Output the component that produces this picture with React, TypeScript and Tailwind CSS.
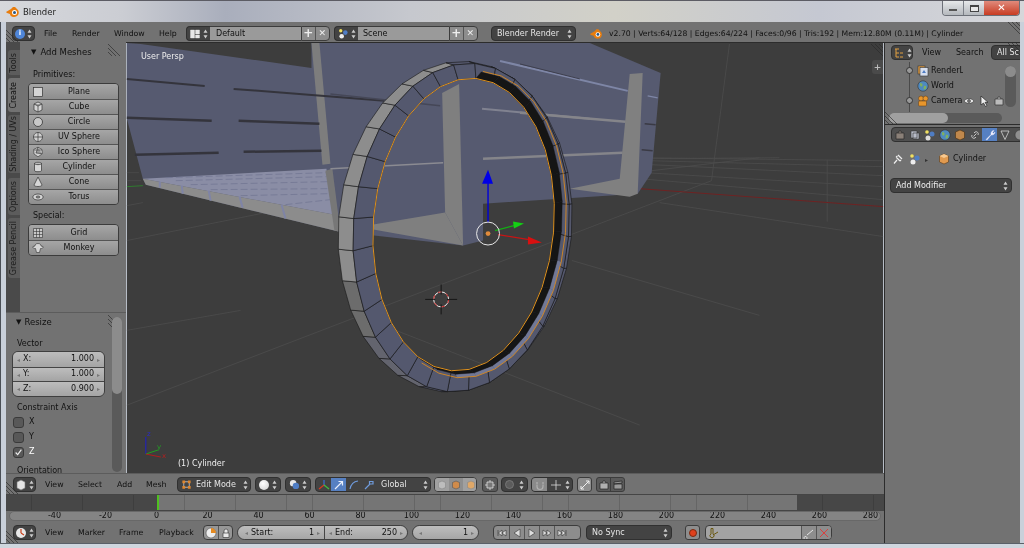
import type { ReactNode } from "react";

const N = 32;
const TILT = (4.8 * Math.PI) / 180;
type Ell = { cx: number; cy: number; rx: number; ry: number };

// ring outlines, measured off the reference
const E1: Ell = { cx: 455, cy: 226, rx: 117, ry: 166 };
const E2: Ell = { cx: 461, cy: 227, rx: 108, ry: 165 };
const E3: Ell = { cx: 463.5, cy: 224, rx: 90.5, ry: 147 };
const E4: Ell = { cx: 470, cy: 224, rx: 96, ry: 154 };
const E5: Ell = { cx: 468.5, cy: 222.5, rx: 93.5, ry: 152 };

function pt(e: Ell, a: number): [number, number] {
  const x = e.rx * Math.cos(a);
  const y = e.ry * Math.sin(a);
  return [e.cx + x * Math.cos(TILT) - y * Math.sin(TILT), e.cy + x * Math.sin(TILT) + y * Math.cos(TILT)];
}
const ang = (i: number) => (i / N) * Math.PI * 2;

function quad(a: Ell, b: Ell, i: number) {
  const p = [pt(a, ang(i)), pt(a, ang(i + 1)), pt(b, ang(i + 1)), pt(b, ang(i))];
  return p.map((q) => q.join(",")).join(" ");
}
function arc(e: Ell, from: number, to: number) {
  const out: string[] = [];
  for (let i = from; i <= to; i++) out.push(pt(e, ang(i)).join(","));
  return out.join(" ");
}

function rimColor(i: number) {
  const a = ang(i + 0.5);
  const c = Math.cos(a);
  const s = Math.sin(a);
  if (c > -0.25) return "#55586d";
  if (s > 0.75) return "#63646e";
  if (s > 0.35) return "#6c6c6c";
  return "#8d8d8d";
}

function Ring() {
  const idx = Array.from({ length: N }, (_, i) => i);
  return (
    <g>
      {idx.map((i) => (
        <polygon key={`r${i}`} points={quad(E1, E2, i)} fill={rimColor(i)} stroke="#161616" strokeWidth="0.6" />
      ))}
      {idx.map((i) => (
        <polygon key={`f${i}`} points={quad(E2, E3, i)} fill="#54586e" stroke="#161616" strokeWidth="0.6" />
      ))}
      {idx.filter((i) => i >= 1 && i <= 7).map((i) => (
        <polygon key={`l${i}`} points={quad(E5, E4, i)} fill="#717896" />
      ))}
      {idx.filter((i) => i >= 24 || i <= 9).map((i) => (
        <polygon key={`b${i}`} points={quad(E3, E5, i)} fill="#151515" stroke="#151515" strokeWidth="0.4" />
      ))}
      <polyline points={arc(E4, -8, 10)} fill="none" stroke="#d98a1e" strokeWidth="0.9" />
      <polygon points={arc(E3, 0, N)} fill="none" stroke="#e0931f" strokeWidth="1" />
    </g>
  );
}

function Scene() {
  const gridLines = [
    [640, 157, 884, 160], [650, 160, 884, 166], [652, 164, 884, 175], [645, 172, 884, 186], [640, 178, 884, 199],
    [640, 158, 780, 157], [652, 170, 760, 157], [712, 180, 730, 43], [712, 180, 126, 405], [828, 159, 828, 221],
    [660, 202, 884, 236], [572, 260, 760, 315], [380, 324, 640, 425], [126, 330, 240, 310], [126, 240, 300, 205],
    [126, 205, 142, 202], [126, 172, 138, 172], [126, 180, 140, 180],
  ];
  return (
    <svg viewBox="126 42 758 431" className="absolute inset-0 h-full w-full">
      <rect x="126" y="42" width="758" height="431" fill="#3d3d3d" />
      {gridLines.map((l, i) => (
        <line key={i} x1={l[0]} y1={l[1]} x2={l[2]} y2={l[3]} stroke="#4c4c4c" strokeWidth="0.8" />
      ))}
      <line x1="640" y1="188" x2="884" y2="206" stroke="#6e2222" strokeWidth="1" />
      <line x1="126" y1="186" x2="142" y2="185" stroke="#2f7a2f" strokeWidth="1" />

      {/* crate */}
      <polygon
        points="126,42 140,43 311,67 311,42 590,42 661,72 652,172 638,193 483,203 483,240 463,245 338,231 145,184 142,178 126,118"
        fill="#565a70"
      />
      <polygon points="142,178 326,168 333,214" fill="#8a8da5" />
      <polygon points="142,178 333,214 338,231 145,184" fill="#8c8c8c" />
      {[[159, 181, 159, 187], [181, 185, 182, 193], [208, 190, 210, 200], [239, 196, 242, 207], [281, 204, 285, 218]].map((l, i) => (
        <line key={i} x1={l[0]} y1={l[1]} x2={l[2]} y2={l[3]} stroke="#7f84a6" strokeWidth="2" />
      ))}
      {[[165, 177, 326, 172], [175, 180, 326, 176], [190, 184, 328, 181], [210, 189, 329, 188], [240, 195, 330, 193], [285, 204, 330, 199]].map((l, i) => (
        <line key={i} x1={l[0]} y1={l[1]} x2={l[2]} y2={l[3]} stroke="#6f7390" strokeWidth="0.7" strokeDasharray="7 3" />
      ))}
      <polygon points="311,42 319,42 330,163 322,164" fill="#7d7d7d" />
      <polygon points="325,170 332,168 340,231 334,230" fill="#777" />
      <line x1="126" y1="78" x2="204" y2="85" stroke="#34343c" strokeWidth="2" />
      <line x1="233" y1="88" x2="384" y2="100" stroke="#34343c" strokeWidth="2" />
      <line x1="126" y1="117" x2="211" y2="120" stroke="#34343c" strokeWidth="2.5" />
      <line x1="238" y1="120" x2="319" y2="123" stroke="#34343c" strokeWidth="2.5" />
      <line x1="134" y1="154" x2="218" y2="152" stroke="#34343c" strokeWidth="2.5" />
      <line x1="243" y1="151" x2="321" y2="150" stroke="#34343c" strokeWidth="2.5" />
      <line x1="330" y1="93" x2="440" y2="105" stroke="#454757" strokeWidth="1.5" />
      <line x1="330" y1="168" x2="443" y2="162" stroke="#8b8b92" strokeWidth="1.5" />
      <polygon points="442,92 459,83 463,245 445,212" fill="#7f7f7f" />
      <polygon points="373,224 445,212 463,245 373,229" fill="#7f7f7f" />
      <line x1="482" y1="108" x2="590" y2="118" stroke="#808290" strokeWidth="2" />
      <line x1="483" y1="158" x2="623" y2="152" stroke="#85858a" strokeWidth="2.5" />
      <line x1="520" y1="112" x2="626" y2="121" stroke="#85858a" strokeWidth="2.5" />
      <line x1="500" y1="60" x2="628" y2="90" stroke="#7e86a6" strokeWidth="2" />
      <line x1="520" y1="63" x2="580" y2="78" stroke="#3d3e4c" strokeWidth="1" />
      <polygon points="630,73 643,72 638,193 630,196 570,188 620,178" fill="#808080" />
      <line x1="648" y1="95" x2="658" y2="97" stroke="#7e86a6" strokeWidth="1.5" />
      <line x1="645" y1="123" x2="656" y2="124" stroke="#3a3a44" strokeWidth="1.5" />
      <line x1="642" y1="149" x2="653" y2="150" stroke="#3a3a44" strokeWidth="1.5" />

      <Ring />

      {/* transform gizmo */}
      <line x1="488" y1="222" x2="488" y2="182" stroke="#0000d8" strokeWidth="1.4" />
      <polygon points="488,169 482,183 493,183" fill="#0000e6" />
      <line x1="495" y1="230" x2="514" y2="225" stroke="#12b012" strokeWidth="1.2" />
      <polygon points="524,223 513,221 514,228" fill="#14d014" />
      <line x1="498" y1="234" x2="529" y2="239" stroke="#c81414" strokeWidth="1.2" />
      <polygon points="542,242 528,236 528,244" fill="#d81010" />
      <circle cx="488" cy="233" r="11.5" fill="none" stroke="#e8e8e8" strokeWidth="1" />
      <circle cx="488" cy="233" r="2.4" fill="#e08a3c" />

      {/* 3d cursor */}
      <circle cx="441" cy="299" r="7.5" fill="none" stroke="#f0f0f0" strokeWidth="1" />
      <circle cx="441" cy="299" r="7.5" fill="none" stroke="#c81e1e" strokeWidth="1" strokeDasharray="4 4" />
      <path d="M425 299h10M447 299h10M441 284v10M441 304v10" stroke="#111" strokeWidth="0.9" />

      {/* axis widget */}
      <line x1="145" y1="454" x2="145" y2="437" stroke="#1e1ec8" strokeWidth="1" />
      <line x1="145" y1="454" x2="157" y2="450" stroke="#1fa01f" strokeWidth="1" />
      <line x1="145" y1="454" x2="160" y2="457" stroke="#b01c1c" strokeWidth="1" />
    </svg>
  );
}

function Hatch({ className, flip }: { className: string; flip?: boolean }) {
  return (
    <svg viewBox="0 0 12 12" className={`absolute h-[12px] w-[12px] ${className}`}>
      <path
        d={flip ? "M0 0l12 12M4 0l8 8M8 0l4 4" : "M0 0l12 12M0 4l8 8M0 8l4 4"}
        stroke="#2a2a2a"
        strokeWidth="0.8"
        opacity="0.8"
      />
    </svg>
  );
}

function Updown({ light }: { light?: boolean }) {
  return (
    <svg viewBox="0 0 5 10" className="h-[10px] w-[5px] shrink-0">
      <path d="M2.5 0.5L4.5 3.8H0.5ZM2.5 9.5L4.5 6.2H0.5Z" fill={light ? "#dddddd" : "#cccccc"} />
    </svg>
  );
}

function DarkBtn({ className, children }: { className: string; children: ReactNode }) {
  return (
    <div className={`flex h-[15px] shrink-0 items-center rounded-[4px] border border-[#303030] bg-[#434343] text-[#e6e6e6] ${className}`}>
      {children}
    </div>
  );
}

function Menu({ items }: { items: [string, number][] }) {
  return (
    <>
      {items.map(([t, w]) => (
        <span key={t} className="shrink-0 text-[7.8px] text-[#101010]" style={{ width: w }}>
          {t}
        </span>
      ))}
    </>
  );
}

function MeshIcon({ name }: { name: string }) {
  const s = "#333";
  return (
    <svg viewBox="0 0 12 12" className="h-[12px] w-[12px] shrink-0">
      {name === "Plane" && <rect x="1.5" y="1.5" width="9" height="9" fill="#d4d4d4" stroke={s} strokeWidth="0.7" />}
      {name === "Cube" && <path d="M6 1l4 2v6l-4 2-4-2V3zM2 3l4 2 4-2M6 5v6" fill="#d4d4d4" stroke={s} strokeWidth="0.7" />}
      {name === "Circle" && <circle cx="6" cy="6" r="4.5" fill="#c8c8c8" stroke={s} strokeWidth="0.8" />}
      {name === "UV Sphere" && <path d="M6 1.5a4.5 4.5 0 1 0 .01 0zM1.5 6h9M6 1.5v9" fill="#d0d0d0" stroke={s} strokeWidth="0.7" />}
      {name === "Ico Sphere" && <path d="M6 1.2l4 2.3.4 4.2L6 10.8 2 8 1.6 3.5zM2 4l8 0M6 1.2L4 7l6 .7" fill="#d0d0d0" stroke={s} strokeWidth="0.6" />}
      {name === "Cylinder" && <path d="M2.5 2.5C2.5 .9 9.5 .9 9.5 2.5V9.5C9.5 11.1 2.5 11.1 2.5 9.5ZM2.5 2.5C2.5 4 9.5 4 9.5 2.5" fill="#d6d6d6" stroke={s} strokeWidth="0.7" />}
      {name === "Cone" && <path d="M6 1L10 9C10 11 2 11 2 9Z" fill="#d6d6d6" stroke={s} strokeWidth="0.7" />}
      {name === "Torus" && <path d="M6 3C9 3 11.2 4.4 11.2 6S9 9 6 9 .8 7.6.8 6 3 3 6 3ZM6 5C4.8 5 4 5.5 4 6S4.8 7 6 7 8 6.500 8 6 7.200 5 6 5Z" fill="#d6d6d6" stroke={s} strokeWidth="0.7" fillRule="evenodd" />}
      {name === "Grid" && <path d="M1.500 1.500h9v9h-9zM4.500 1.500v9M7.500 1.500v9M1.500 4.500h9M1.500 7.500h9" fill="#c8c8c8" stroke={s} strokeWidth="0.6" />}
      {name === "Monkey" && <path d="M6 1.500C8.500 1.500 9 3 9 4L11 4.500C11.500 6 10 6.800 8.500 6.500L7.500 10.500H4.500L3.500 6.500C2 6.800.500 6 1 4.500L3 4C3 3 3.500 1.500 6 1.500Z" fill="#d4d4d4" stroke={s} strokeWidth="0.6" />}
    </svg>
  );
}

function MeshGroup({ names }: { names: string[] }) {
  return (
    <div className="ml-[8px] mr-[7px] flex flex-col overflow-hidden rounded-[4px] border border-[#3c3c3c]">
      {names.map((n, i) => (
        <div
          key={n}
          className={`flex h-[15px] items-center bg-[linear-gradient(#a6a6a6,#8d8d8d)] pl-[3px] text-[8px] text-[#111] ${i > 0 ? "border-t border-[#555]" : ""}`}
        >
          <MeshIcon name={n} />
          <span className="flex-1 pr-[4px] text-center">{n}</span>
        </div>
      ))}
    </div>
  );
}

function VTab({ label, h, active, mt }: { label: string; h: number; active?: boolean; mt: number }) {
  return (
    <div
      className={`flex w-[12px] items-center justify-center overflow-hidden rounded-l-[3px] text-[8px] ${active ? "ml-[2px] bg-[#727272] text-[#111]" : "ml-[2px] bg-[#5c5c5c] text-[#1c1c1c]"}`}
      style={{ height: h, marginTop: mt }}
    >
      <span className="rotate-180 whitespace-nowrap [writing-mode:vertical-rl]">{label}</span>
    </div>
  );
}

function NumRow({ label, value }: { label: string; value: string }) {
  return (
    <div className="flex h-[14.5px] items-center border-t border-[#454545] bg-[linear-gradient(#bdbdbd,#a4a4a4)] px-[4px] text-[8px] text-[#111] first:border-t-0">
      <span className="mr-[3px] text-[6px] text-[#777]">◂</span>
      <span>{label}</span>
      <span className="flex-1 pr-[3px] text-right">{value}</span>
      <span className="text-[6px] text-[#777]">▸</span>
    </div>
  );
}

function Check({ label, on }: { label: string; on?: boolean }) {
  return (
    <div className="flex h-[15px] items-center">
      <div className="relative h-[11px] w-[11px] rounded-[3px] border border-[#3a3a3a] bg-[#585858]">
        {on && (
          <svg viewBox="0 0 11 11" className="absolute inset-0">
            <path d="M2 5.500L4.500 8L9 2" fill="none" stroke="#eee" strokeWidth="1.4" />
          </svg>
        )}
      </div>
      <span className={`ml-[5px] text-[8px] ${on ? "text-white" : "text-[#111]"}`}>{label}</span>
    </div>
  );
}

function ToolsPanel() {
  return (
    <div className="relative flex w-[120px] shrink-0 flex-col bg-[#727272]">
      <div className="relative flex h-[270px] shrink-0">
        <div className="flex w-[14px] shrink-0 flex-col bg-[#4a4a4a]">
          <VTab label="Tools" h={25} mt={8} />
          <VTab label="Create" h={34} active mt={3} />
          <VTab label="Shading / UVs" h={58} mt={3} />
          <VTab label="Options" h={37} mt={5} />
          <VTab label="Grease Pencil" h={60} mt={3} />
        </div>
        <div className="relative flex-1">
          <Hatch className="right-[6px] top-[2px]" />
          <div className="flex h-[20px] items-center pl-[11px] pt-[1px] text-[8.500px] text-[#111]">
            <span className="mr-[4px] text-[7px]">▼</span>Add Meshes
          </div>
          <div className="pl-[13px] pt-[6px] text-[8px] leading-[14px] text-[#111]">Primitives:</div>
          <div className="mt-[1px]">
            <MeshGroup names={["Plane", "Cube", "Circle", "UV Sphere", "Ico Sphere", "Cylinder", "Cone", "Torus"]} />
          </div>
          <div className="pl-[13px] pt-[4px] text-[8px] leading-[14px] text-[#111]">Special:</div>
          <div className="mt-[1px]">
            <MeshGroup names={["Grid", "Monkey"]} />
          </div>
        </div>
      </div>
      <div className="relative flex-1 overflow-hidden border-t border-[#5c5c5c] pl-[6px]">
        <Hatch className="right-[6px] top-[2px]" />
        <div className="absolute bottom-[1px] right-[4px] top-[4px] w-[10px] rounded-full bg-[#5a5a5a]">
          <div className="h-[77px] rounded-full bg-[#8c8c8c]" />
        </div>
        <div className="flex h-[19px] items-center pl-[4px] text-[8.500px] text-[#111]">
          <span className="mr-[3px] text-[7px]">▼</span>Resize
        </div>
        <div className="pl-[5px] pt-[5px] text-[8px] leading-[14px] text-[#111]">Vector</div>
        <div className="w-[93px] overflow-hidden rounded-[6px] border border-[#3f3f3f]">
          <NumRow label="X:" value="1.000" />
          <NumRow label="Y:" value="1.000" />
          <NumRow label="Z:" value="0.900" />
        </div>
        <div className="pl-[5px] pt-[4px] text-[8px] leading-[14px] text-[#111]">Constraint Axis</div>
        <div className="pl-[1px]">
          <Check label="X" />
          <Check label="Y" />
          <Check label="Z" on />
        </div>
        <div className="pl-[5px] pt-[4px] text-[8px] leading-[14px] text-[#111]">Orientation</div>
      </div>
    </div>
  );
}

function Viewport() {
  return (
    <div className="relative flex-1 overflow-hidden border-t border-[#2c2c2c]">
      <Scene />
      <span className="absolute left-[15px] top-[8px] text-[8px] text-[#eeeeee]">User Persp</span>
      <span className="absolute bottom-[3px] left-[52px] text-[8px] text-[#eeeeee]">(1) Cylinder</span>
      <span className="absolute left-[21px] top-[386px] text-[7px] text-[#2a2ac8]">z</span>
      <span className="absolute left-[31px] top-[399px] text-[7px] text-[#22a022]">y</span>
      <span className="absolute left-[36px] top-[408px] text-[7px] text-[#b02020]">x</span>
      <Hatch className="right-[1px] top-[1px]" flip />
      <div className="absolute right-[1px] top-[17px] flex h-[14px] w-[11px] items-center justify-center rounded-l-[3px] bg-[#4a4a4a] text-[9px] font-bold leading-none text-[#bbb]">
        +
      </div>
    </div>
  );
}

function Tool({ children, className = "" }: { children: ReactNode; className?: string }) {
  return <div className={`flex h-[15px] shrink-0 items-center justify-center ${className}`}>{children}</div>;
}

function Small({ d, fill = "none", stroke = "#ddd", sw = 1 }: { d: string; fill?: string; stroke?: string; sw?: number }) {
  return (
    <svg viewBox="0 0 12 12" className="h-[12px] w-[12px]">
      <path d={d} fill={fill} stroke={stroke} strokeWidth={sw} />
    </svg>
  );
}

function CubeEditorIcon() {
  return <Small d="M6 1l4 2v6l-4 2-4-2V3z" fill="#e4e4e4" stroke="#777" sw={0.6} />;
}

function ClockIcon() {
  return (
    <svg viewBox="0 0 12 12" className="h-[12px] w-[12px]">
      <circle cx="6" cy="6" r="5" fill="#e8e8e8" />
      <path d="M6 6V2M6 6l3 2" stroke="#c8401c" strokeWidth="1.2" />
    </svg>
  );
}

function ViewHeader() {
  return (
    <div className="relative flex h-[21px] shrink-0 items-center border-t border-[#5c5c5c] bg-[#727272] pl-[7px] pt-[1px]">
      <Hatch className="bottom-0 left-0" />
      <DarkBtn className="w-[23px] justify-center gap-[2px]"><CubeEditorIcon /><Updown /></DarkBtn>
      <div className="ml-[9px] flex items-center"><Menu items={[["View", 33], ["Select", 39], ["Add", 29], ["Mesh", 31]]} /></div>
      <DarkBtn className="w-[74px] pl-[3px] pr-[2px] text-[8px]">
        <svg viewBox="0 0 12 12" className="h-[11px] w-[11px]">
          <path d="M3 3h6v6H3z" fill="none" stroke="#d8d8d8" strokeWidth="0.8" />
          <path d="M1.500 1.500h3v3h-3zM7.500 1.500h3v3h-3zM1.500 7.500h3v3h-3zM7.500 7.500h3v3h-3z" fill="#e0862e" />
        </svg>
        <span className="ml-[4px] flex-1">Edit Mode</span><Updown />
      </DarkBtn>
      <DarkBtn className="ml-[4px] w-[26px] justify-between px-[3px]">
        <span className="h-[10px] w-[10px] rounded-full bg-[radial-gradient(circle_at_40%_35%,#fff,#cfcfcf)]" /><Updown />
      </DarkBtn>
      <DarkBtn className="ml-[4px] w-[26px] justify-between px-[3px]">
        <svg viewBox="0 0 12 12" className="h-[11px] w-[11px]"><circle cx="4.500" cy="4.500" r="3.500" fill="#e8e8e8" /><circle cx="7.500" cy="7.500" r="3.500" fill="#4f7dc4" /></svg>
        <Updown />
      </DarkBtn>
      <div className="ml-[4px] flex h-[15px] w-[116px] shrink-0 items-center overflow-hidden rounded-[4px] border border-[#303030] bg-[#434343]">
        <Tool className="w-[15px]">
          <svg viewBox="0 0 12 12" className="h-[12px] w-[12px]"><path d="M6 6V1" stroke="#3a6fd8" strokeWidth="1.200" /><path d="M6 6L1 10" stroke="#d83a20" strokeWidth="1.200" /><path d="M6 6l5 4" stroke="#3fc03f" strokeWidth="1.200" /></svg>
        </Tool>
        <Tool className="w-[15px] bg-[#5680c2]"><Small d="M2 10L9 3M5.500 2.500H9.500V6.500" stroke="#e8eefc" sw={1.200} /></Tool>
        <Tool className="w-[15px]"><Small d="M2 10C3 5 6 2.500 10 2" stroke="#6f9bdc" sw={1.200} /></Tool>
        <Tool className="w-[15px]"><Small d="M2 10L7 5M6.500 2.500H10V5H6.500Z" stroke="#6f9bdc" sw={1.200} /></Tool>
        <span className="ml-[5px] flex-1 text-[8px] text-[#e6e6e6]">Global</span>
        <span className="pr-[2px]"><Updown /></span>
      </div>
      <div className="ml-[3px] flex h-[15px] w-[43px] shrink-0 items-center overflow-hidden rounded-[4px] border border-[#3c3c3c] bg-[#8e8e8e]">
        <Tool className="w-[14px] bg-[#a0a0a0]"><Small d="M6 2l3.500 1.500v5L6 10 2.500 8.500v-5z" fill="#bdbdbd" stroke="#888" sw={0.6} /></Tool>
        <Tool className="w-[14px]"><Small d="M6 2l3.500 1.500v5L6 10 2.500 8.500v-5z" fill="#d08b4a" stroke="#555" sw={0.6} /></Tool>
        <Tool className="w-[15px] bg-[#a0a0a0]"><Small d="M6 2l3.500 1.500v5L6 10 2.500 8.500v-5z" fill="#e0a868" stroke="#888" sw={0.6} /></Tool>
      </div>
      <div className="ml-[5px] flex h-[15px] w-[16px] shrink-0 items-center justify-center rounded-[3px] border border-[#3c3c3c] bg-[#5a5a5a]">
        <Small d="M3 3h6v6H3zM1 6h2M9 6h2M6 1v2M6 9v2" fill="#777" stroke="#e0e0e0" sw={0.8} />
      </div>
      <DarkBtn className="ml-[3px] w-[27px] justify-between px-[3px]">
        <span className="h-[9px] w-[9px] rounded-full border border-[#777] bg-[#5c5c5c]" /><Updown />
      </DarkBtn>
      <div className="ml-[3px] flex h-[15px] w-[42px] shrink-0 items-center overflow-hidden rounded-[4px] border border-[#303030] bg-[#434343]">
        <Tool className="w-[15px] bg-[#8a8a8a]"><Small d="M3 5.500v2a3 3 0 0 0 6 0v-2M3 3v2M9 3v2" stroke="#b0b0b0" sw={1.200} /></Tool>
        <Tool className="w-[18px]"><Small d="M6 1v10M1 6h10" stroke="#dcdcdc" sw={0.8} /></Tool>
        <Updown />
      </div>
      <div className="ml-[4px] flex h-[15px] w-[15px] shrink-0 items-center justify-center rounded-[3px] border border-[#3c3c3c] bg-[#8e8e8e]">
        <Small d="M2 10L10 2M2 7v3h3M7 2h3v3" stroke="#f0f0f0" sw={1} />
      </div>
      <div className="ml-[4px] flex h-[15px] w-[29px] shrink-0 items-center overflow-hidden rounded-[3px] border border-[#3c3c3c] bg-[#5a5a5a]">
        <Tool className="w-[14px] border-r border-[#3c3c3c]"><Small d="M2 4h8v6H2zM4 4l1-2h2l1 2" fill="#b0b0b0" stroke="#222" sw={0.7} /></Tool>
        <Tool className="w-[14px]"><Small d="M2 5h8v5H2zM2 3l8-1v2l-8 1z" fill="#999" stroke="#222" sw={0.7} /></Tool>
      </div>
    </div>
  );
}

const TICKS = [-40, -20, 0, 20, 40, 60, 80, 100, 120, 140, 160, 180, 200, 220, 240, 260, 280];

function Timeline() {
  return (
    <div className="relative h-[28px] shrink-0 bg-[#727272]">
      <div className="flex h-[17px] border-y border-[#454545] bg-[#757575]">
        <div className="w-[151px] shrink-0 bg-[#474747] bg-[repeating-linear-gradient(90deg,transparent_0,transparent_25px,#3e3e3e_25px,#3e3e3e_25.600px)]" />
        <div className="w-[2px] shrink-0 bg-[#4fc020]" />
        <div className="w-[638px] shrink-0 bg-[repeating-linear-gradient(90deg,transparent_0,transparent_25px,#656565_25px,#656565_25.600px)]" />
        <div className="flex-1 bg-[#474747] bg-[repeating-linear-gradient(90deg,transparent_0,transparent_25px,#3e3e3e_25px,#3e3e3e_25.600px)]" />
      </div>
      <div className="mx-[3px] flex h-[10px] items-center overflow-hidden rounded-full border border-[#686868] bg-[#848484] pl-[19px] text-[8px] leading-none text-[#111]">
        {TICKS.map((t) => (
          <span key={t} className="w-[51px] shrink-0 text-center">{t}</span>
        ))}
      </div>
    </div>
  );
}

function TimeField({ label, value, className }: { label: string; value: string; className: string }) {
  return (
    <div className={`flex h-full items-center bg-[linear-gradient(#bdbdbd,#a6a6a6)] px-[4px] text-[8px] text-[#111] ${className}`}>
      <span className="mr-[3px] text-[6px] text-[#777]">◂</span>
      <span>{label}</span>
      <span className="flex-1 pr-[3px] text-right">{value}</span>
      <span className="text-[6px] text-[#777]">▸</span>
    </div>
  );
}

function Transport({ d }: { d: string }) {
  return (
    <Tool className="w-[15px] border-l border-[#555] first:border-l-0">
      <Small d={d} fill="#ddd" stroke="#333" sw={0.6} />
    </Tool>
  );
}

function TimeHeader() {
  return (
    <div className="relative flex h-[21px] shrink-0 items-center bg-[#727272] pl-[7px]">
      <Hatch className="bottom-0 left-0" />
      <DarkBtn className="w-[23px] justify-center gap-[2px]"><ClockIcon /><Updown /></DarkBtn>
      <div className="ml-[9px] flex items-center"><Menu items={[["View", 33], ["Marker", 41], ["Frame", 40], ["Playback", 44]]} /></div>
      <div className="flex h-[15px] w-[30px] shrink-0 items-center overflow-hidden rounded-[4px] border border-[#3c3c3c] bg-[#969696]">
        <Tool className="w-[15px] border-r border-[#555]">
          <svg viewBox="0 0 12 12" className="h-[12px] w-[12px]"><circle cx="6" cy="6" r="5" fill="#eee" stroke="#555" strokeWidth="0.6" /><path d="M6 6V1a5 5 0 0 1 5 5z" fill="#e58a20" /></svg>
        </Tool>
        <Tool className="w-[14px]"><Small d="M3 6h6v4.500H3zM4 6V4a2 2 0 0 1 4 0v2" fill="#e8e8e8" stroke="#444" sw={0.7} /></Tool>
      </div>
      <div className="ml-[4px] flex h-[15px] w-[171px] shrink-0 overflow-hidden rounded-full border border-[#3f3f3f]">
        <TimeField label="Start:" value="1" className="w-[87px] pl-[7px] border-r border-[#454545]" />
        <TimeField label="End:" value="250" className="flex-1" />
      </div>
      <div className="ml-[4px] h-[15px] w-[67px] shrink-0 overflow-hidden rounded-full border border-[#3f3f3f]">
        <TimeField label="" value="1" className="pl-[6px]" />
      </div>
      <div className="ml-[14px] flex h-[15px] w-[88px] shrink-0 items-center overflow-hidden rounded-[4px] border border-[#3c3c3c] bg-[#8d8d8d]">
        <Transport d="M2 3v6M10 3L6 6l4 3zM6 3L2.500 6 6 9z" />
        <Transport d="M9 2v8L3 6z" />
        <Transport d="M3 2v8l6-4z" />
        <Transport d="M2 3l4 3-4 3zM6 3l4 3-4 3z" />
        <Transport d="M10 3v6M2 3l4 3-4 3zM6 3l3.500 3L6 9z" />
      </div>
      <DarkBtn className="ml-[5px] w-[86px] pl-[5px] pr-[3px] text-[8px]">
        <span className="flex-1">No Sync</span><Updown />
      </DarkBtn>
      <div className="ml-[13px] flex h-[15px] w-[15px] shrink-0 items-center justify-center rounded-[3px] border border-[#3c3c3c] bg-[#8d8d8d]">
        <span className="h-[8px] w-[8px] rounded-full border border-[#7a2a10] bg-[#e0401c]" />
      </div>
      <div className="ml-[5px] flex h-[15px] w-[127px] shrink-0 items-center overflow-hidden rounded-[4px] border border-[#3c3c3c] bg-[#a3a3a3]">
        <div className="flex h-full flex-1 items-center pl-[2px]">
          <Small d="M3 1.500h2V7a2 2 0 1 1-2 0zM5 8l5-3" stroke="#6a5810" sw={1} />
        </div>
        <Tool className="w-[15px] border-l border-[#555] bg-[#8d8d8d]"><Small d="M2.500 9.500a1.500 1.500 0 1 0 .01 0M4 8l6-5" stroke="#eee" sw={0.9} /></Tool>
        <Tool className="w-[15px] border-l border-[#555] bg-[#8d8d8d]"><Small d="M2 2l8 8M2 10l8-8" stroke="#d84040" sw={1} /></Tool>
      </div>
    </div>
  );
}

function RenderLayerIcon() {
  return (
    <svg viewBox="0 0 12 12" className="h-[12px] w-[12px]">
      <rect x="1" y="1" width="7" height="8" fill="#e8a040" stroke="#333" strokeWidth="0.6" />
      <rect x="3" y="2.500" width="8" height="8.500" fill="#d6deee" stroke="#333" strokeWidth="0.6" />
      <path d="M5 8l2-3 2 3z" fill="#4f7dc4" />
    </svg>
  );
}

function WorldIcon() {
  return (
    <svg viewBox="0 0 12 12" className="h-[12px] w-[12px]">
      <circle cx="6" cy="6" r="5.200" fill="#4f8ac0" stroke="#333" strokeWidth="0.6" />
      <path d="M3 3c2 0 3 1 2.500 2.500S3.500 7 3 5.500zM7 6c2-.5 3 .5 2 2.500S6.500 9.500 6.500 8z" fill="#7fb060" />
    </svg>
  );
}

function CameraIcon() {
  return (
    <svg viewBox="0 0 12 12" className="h-[12px] w-[12px]">
      <circle cx="4" cy="3.500" r="2.500" fill="#e8962c" stroke="#5a3a1a" strokeWidth="0.5" />
      <circle cx="8.500" cy="3.500" r="2.500" fill="#e8962c" stroke="#5a3a1a" strokeWidth="0.5" />
      <rect x="1.500" y="6" width="8" height="5" rx="1" fill="#e8962c" stroke="#5a3a1a" strokeWidth="0.5" />
    </svg>
  );
}

function OutlinerRow({ label, icon, extras, dot }: { label: string; icon: ReactNode; extras?: boolean; dot?: boolean }) {
  return (
    <div className="relative flex h-[15px] items-center pl-[32px] text-[8px] text-[#111]">
      {dot && <span className="absolute left-[21px] h-[7px] w-[7px] rounded-full border border-[#333] bg-[#999]" />}
      {icon}
      <span className="ml-[2px] w-[32px] shrink-0 overflow-hidden whitespace-nowrap">{label}</span>
      {extras && (
        <div className="flex items-center gap-[3px]">
          <Small d="M1 6C3 3 9 3 11 6 9 9 3 9 1 6ZM6 4.500a1.500 1.500 0 1 0 .01 0" fill="#eee" stroke="#333" sw={0.6} />
          <Small d="M3 1v9l2.500-2 2 3.500 1.500-1-2-3.200H10z" fill="#eee" stroke="#222" sw={0.7} />
          <Small d="M2 4h8v6H2zM4 4l1-2h2l1 2" fill="#bbb" stroke="#333" sw={0.7} />
        </div>
      )}
    </div>
  );
}

// property editor tabs: render, layers, scene, world, object, constraints, modifiers, data, material
const PROP_TABS: ReactNode[] = [
  <Small key="a" d="M2 4h8v6H2zM4 4l1-2h2l1 2" fill="#8a8078" stroke="#2a2a2a" sw={0.7} />,
  <Small key="b" d="M2 2h6v7H2zM4 4h6v6H4z" fill="#b8bcc8" stroke="#333" sw={0.6} />,
  <svg key="c" viewBox="0 0 12 12" className="h-[12px] w-[12px]"><circle cx="3" cy="3" r="1.800" fill="#f0e060" /><circle cx="8" cy="5" r="2.500" fill="#4f7dc4" /><circle cx="4" cy="9" r="2.500" fill="#ddd" /></svg>,
  <WorldIcon key="d" />,
  <Small key="e" d="M6 1l4.500 2v6L6 11 1.500 9V3z" fill="#c0884c" stroke="#4a3010" sw={0.6} />,
  <Small key="f" d="M4.500 7.500l3-3M3 6a2.200 2.200 0 0 0 3 3l1-1M5 4l1-1a2.200 2.200 0 0 1 3 3" stroke="#d0d0d0" sw={0.9} />,
  <Small key="g" d="M2 10.500L7 5.500C6.500 3.500 8 1.500 10 1.500L8.500 3.500 9.500 4.500 11 3C11 5 9 6.500 7 6L3 11z" fill="#eef" stroke="#eef" sw={0.4} />,
  <Small key="h" d="M2 2h8L6 10.500z" stroke="#d4d4d4" sw={0.8} />,
  <svg key="i" viewBox="0 0 12 12" className="h-[12px] w-[12px]"><circle cx="6" cy="6" r="5" fill="#8f8f8f" stroke="#333" strokeWidth="0.5" /></svg>,
];

function RightPanel() {
  return (
    <div className="flex w-[136px] shrink-0 flex-col overflow-hidden border-l border-[#2c2c2c] bg-[#727272]">
      <div className="relative flex h-[20px] shrink-0 items-center border-t border-[#2c2c2c] pl-[6px]">
        <DarkBtn className="w-[22px] justify-center gap-[2px]">
          <Small d="M2 2h4M3 2v8h3M3 6h3M7 6h3M7 10h3" stroke="#e2a040" sw={1} /><Updown />
        </DarkBtn>
        <span className="ml-[9px] w-[34px] shrink-0 text-[8px] text-[#111]">View</span>
        <span className="w-[35px] shrink-0 text-[8px] text-[#111]">Search</span>
        <div className="flex h-[15px] w-[40px] shrink-0 items-center overflow-hidden rounded-l-[4px] border border-[#303030] bg-[#434343] pl-[5px] text-[8px] text-[#e6e6e6]">
          <span className="whitespace-nowrap">All Sc</span>
        </div>
        <Hatch className="right-0 top-0" flip />
      </div>
      <div className="relative flex h-[50px] shrink-0 flex-col overflow-hidden bg-[#727272] pt-[1px]">
        <div className="absolute bottom-0 left-[24px] top-0 w-px bg-[#4a4a4a]" />
        <OutlinerRow label="RenderL" icon={<RenderLayerIcon />} dot />
        <OutlinerRow label="World" icon={<WorldIcon />} />
        <OutlinerRow label="Camera" icon={<CameraIcon />} extras dot />
        <div className="absolute bottom-[5px] right-[4px] top-[4px] w-[11px] rounded-full bg-[#5a5a5a]">
          <div className="h-[11px] rounded-full bg-[#8c8c8c]" />
        </div>
      </div>
      <div className="relative h-[12px] shrink-0 pl-[4px] pt-[1px]">
        <div className="h-[10px] w-[113px] rounded-full bg-[#5a5a5a]">
          <div className="h-[10px] w-[59px] rounded-full bg-[#a0a0a0]" />
        </div>
        <Hatch className="bottom-0 left-0" />
      </div>
      <div className="relative flex h-[20px] shrink-0 items-center border-t border-[#2c2c2c] pl-[6px]">
        <div className="flex h-[15px] shrink-0 overflow-hidden rounded-l-[4px] border border-[#303030] bg-[#4f4f4f]">
          {PROP_TABS.map((icon, i) => (
            <div key={i} className={`flex h-full w-[15px] items-center justify-center ${i === 6 ? "bg-[#5680c2]" : ""}`}>
              {icon}
            </div>
          ))}
        </div>
      </div>
      <div className="flex h-[30px] shrink-0 items-center pl-[7px] text-[8px] text-[#111]">
        <Small d="M2 10.500L5 7M4 4l4 4M6 2l4 4M5.500 3L4 4M9 7L8 8" stroke="#eee" sw={1.200} />
        <div className="ml-[5px] h-[12px] w-[12px]">
          <svg viewBox="0 0 12 12"><circle cx="3" cy="3" r="1.800" fill="#f0e060" /><circle cx="8" cy="5" r="2.500" fill="#4f7dc4" /><circle cx="4" cy="9" r="2.500" fill="#eee" /></svg>
        </div>
        <span className="ml-[4px] text-[6px] text-[#333]">▸</span>
        <div className="ml-[10px] h-[12px] w-[12px]">
          <svg viewBox="0 0 12 12"><path d="M6 1l4.500 2v6L6 11 1.500 9V3z" fill="#e09a50" stroke="#5a3a1a" strokeWidth="0.6" /><path d="M1.500 3L6 5l4.500-2L6 1z" fill="#f6c890" /></svg>
        </div>
        <span className="ml-[3px]">Cylinder</span>
      </div>
      <DarkBtn className="mx-[5px] mt-[4px] w-[122px] pl-[5px] pr-[3px] text-[8px] text-[#eee]">
        <span className="flex-1">Add Modifier</span><Updown />
      </DarkBtn>
    </div>
  );
}

export default function App() {
  return (
    <div className="flex h-[548px] w-[1024px] flex-col overflow-hidden bg-[#c9d0da] font-['DejaVu_Sans',sans-serif] blur-[0.4px]">
      {/* title bar */}
      <div className="relative flex h-[22px] shrink-0 items-center border-t border-[#5c5c64] bg-[linear-gradient(90deg,#d6d8dc_0%,#cbcdd3_12%,#a9aebc_22%,#c6c8ce_40%,#d2d1c8_60%,#c5c8d2_80%,#d6d7da_100%)] pl-[6px] pt-[1px]">
        <svg viewBox="0 0 14 12" className="h-[12px] w-[14px]">
          <path d="M0 6L5 3 7 1H9L12 4C14 7 12 11 8 11 5 11 4 9 4 8L1 7z" fill="#e87d0d" />
          <circle cx="8.500" cy="6.500" r="2.500" fill="#fff" />
          <circle cx="8.500" cy="6.500" r="1.500" fill="#265787" />
        </svg>
        <span className="ml-[3px] text-[8.500px] text-[#222]">Blender</span>
        <div className="absolute right-[4px] top-0 flex h-[15px] w-[78px] overflow-hidden rounded-b-[4px] border border-t-0 border-[#6c7078]">
          <div className="flex w-[21px] items-center justify-center border-r border-[#7c8088] bg-[linear-gradient(#e6e8ea,#b4b8bd)]">
            <span className="mt-[3px] h-[2px] w-[8px] border border-[#555] bg-white" />
          </div>
          <div className="flex w-[20px] items-center justify-center bg-[linear-gradient(#e6e8ea,#b4b8bd)]">
            <span className="h-[7px] w-[9px] border border-[#444] border-t-2 bg-[#e8e8e8]" />
          </div>
          <div className="flex flex-1 items-center justify-center bg-[linear-gradient(#e08a7c,#c83c22)] text-[10px] font-bold leading-none text-white">✕</div>
        </div>
      </div>

      <div className="flex min-h-0 flex-1 flex-col border-l border-[#4a4f56] pl-[5px] pr-[4px]">
        {/* info header */}
        <div className="relative flex h-[20px] shrink-0 items-center bg-[#727272] pl-[6px] pt-[3px]">
          <Hatch className="bottom-0 left-0" />
          <Hatch className="right-0 top-0" flip />
          <DarkBtn className="w-[23px] justify-center gap-[2px]">
            <span className="flex h-[10px] w-[10px] items-center justify-center rounded-full bg-[#4f86d8] text-[7px] font-bold leading-none text-white">i</span>
            <Updown />
          </DarkBtn>
          <div className="ml-[9px] flex items-center"><Menu items={[["File", 28], ["Render", 42], ["Window", 45], ["Help", 27]]} /></div>
          <DarkBtn className="w-[24px] justify-center gap-[2px] rounded-r-none border-r-0">
            <Small d="M1.500 2h4v8h-4zM6.500 2h4v4h-4zM6.500 7h4v3h-4z" fill="#e8e8e8" stroke="#e8e8e8" sw={0.4} /><Updown />
          </DarkBtn>
          <div className="flex h-[15px] w-[91px] shrink-0 items-center border-y border-[#3c3c3c] bg-[#9a9a9a] pl-[6px] text-[8px] text-[#111]">Default</div>
          <div className="flex h-[15px] w-[29px] shrink-0 items-center rounded-r-[4px] border border-[#3c3c3c] bg-[#8d8d8d]">
            <span className="w-[14px] border-r border-[#555] text-center text-[12px] font-bold leading-[13px] text-[#eee]">+</span>
            <span className="w-[14px] text-center text-[9px] font-bold leading-[13px] text-[#eee]">✕</span>
          </div>
          <DarkBtn className="ml-[4px] w-[24px] justify-center gap-[2px] rounded-r-none border-r-0">
            <svg viewBox="0 0 12 12" className="h-[11px] w-[11px]"><circle cx="3" cy="3" r="1.800" fill="#f0e060" /><circle cx="8" cy="5" r="2.500" fill="#4f7dc4" /><circle cx="4" cy="9" r="2.500" fill="#eee" /></svg>
            <Updown />
          </DarkBtn>
          <div className="flex h-[15px] w-[91px] shrink-0 items-center border-y border-[#3c3c3c] bg-[#9a9a9a] pl-[5px] text-[8px] text-[#111]">Scene</div>
          <div className="flex h-[15px] w-[29px] shrink-0 items-center rounded-r-[4px] border border-[#3c3c3c] bg-[#8d8d8d]">
            <span className="w-[14px] border-r border-[#555] text-center text-[12px] font-bold leading-[13px] text-[#eee]">+</span>
            <span className="w-[14px] text-center text-[9px] font-bold leading-[13px] text-[#eee]">✕</span>
          </div>
          <DarkBtn className="ml-[13px] w-[85px] pl-[5px] pr-[3px] text-[8px]">
            <span className="flex-1">Blender Render</span><Updown />
          </DarkBtn>
          <svg viewBox="0 0 14 12" className="ml-[14px] h-[12px] w-[13px]">
            <path d="M0 6L5 3 7 1H9L12 4C14 7 12 11 8 11 5 11 4 9 4 8L1 7z" fill="#e87d0d" />
            <circle cx="8.500" cy="6.500" r="2.500" fill="#fff" />
            <circle cx="8.500" cy="6.500" r="1.500" fill="#265787" />
          </svg>
          <span className="ml-[6px] whitespace-nowrap text-[7.7px] text-[#111]">
            v2.70 | Verts:64/128 | Edges:64/224 | Faces:0/96 | Tris:192 | Mem:12.80M (0.11M) | Cylinder
          </span>
        </div>

        <div className="flex min-h-0 flex-1">
          <div className="flex w-[878px] shrink-0 flex-col">
            <div className="flex min-h-0 flex-1">
              <ToolsPanel />
              <Viewport />
            </div>
            <ViewHeader />
            <Timeline />
            <TimeHeader />
          </div>
          <RightPanel />
        </div>
      </div>
      <div className="h-[5px] shrink-0 border-t border-[#5a6068] bg-[#cfd6de]" />
    </div>
  );
}
